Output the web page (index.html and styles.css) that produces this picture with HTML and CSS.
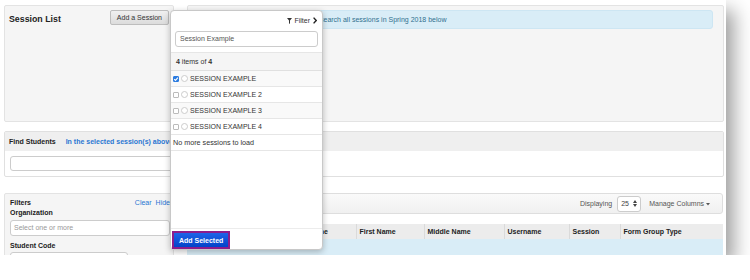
FILE: index.html
```html
<!DOCTYPE html>
<html lang="en">
<head>
<meta charset="utf-8">
<title>Session List</title>
<link rel="stylesheet" href="styles.css">
</head>
<body>
<div class="shot">
  <div class="top">
    <section class="panel sessions">
      <h2>Session List</h2>
      <button class="btn">Add a Session</button>
    </section>
    <section class="panel info">
      <div class="alert">search all sessions in Spring 2018 below</div>
    </section>
  </div>

  <section class="find">
    <div class="find-head">
      <b>Find Students</b>
      <a href="#">In the selected session(s) above</a>
    </div>
    <div class="find-body"><div class="field wide"></div></div>
  </section>

  <div class="results">
    <aside class="panel filters">
      <div class="filters-head">
        <b>Filters</b>
        <span class="links"><a href="#">Clear</a><a href="#">Hide</a></span>
      </div>
      <b class="label">Organization</b>
      <div class="field select">Select one or more</div>
      <b class="label code">Student Code</b>
      <div class="field short"></div>
    </aside>
    <div class="table-area">
      <div class="toolbar">
        <span>Displaying</span>
        <span class="count-select">25
          <svg width="4" height="7" viewBox="0 0 4 7"><path d="M0 3L2 0L4 3zM0 4L2 7L4 4z" fill="#444"/></svg>
        </span>
        <span class="manage">Manage Columns <svg width="4" height="3" viewBox="0 0 4 3"><path d="M0 0H4L2 2.5z" fill="#555"/></svg></span>
      </div>
      <table>
        <colgroup>
          <col style="width:102px"><col style="width:67px"><col style="width:68px"><col style="width:80px"><col style="width:65px"><col style="width:51px"><col>
        </colgroup>
        <thead>
          <tr><th>Student Code</th><th>Last Name</th><th>First Name</th><th>Middle Name</th><th>Username</th><th>Session</th><th>Form Group Type</th></tr>
        </thead>
        <tbody>
          <tr class="selected"><td></td><td></td><td></td><td></td><td></td><td></td><td></td></tr>
        </tbody>
      </table>
    </div>
  </div>

  <div class="dropdown">
    <div class="dd-head">
      <div class="dd-filter">
        <svg width="5" height="6" viewBox="0 0 5 6"><path d="M0 0H5L3 2.6V6L2 5.2V2.6z" fill="#333"/></svg>
        <span>Filter</span>
        <svg class="chev" width="4" height="7" viewBox="0 0 4 7"><path d="M0.6 0.6L3.2 3.5L0.6 6.4" fill="none" stroke="#222" stroke-width="1.4"/></svg>
      </div>
      <div class="dd-search">Session Example</div>
    </div>
    <div class="dd-count"><b>4</b> items of <b>4</b></div>
    <ul class="dd-list">
      <li><span class="check on"><svg width="6" height="6" viewBox="0 0 6 6"><path d="M1.2 3.1L2.5 4.4L4.9 1.6" fill="none" stroke="#fff" stroke-width="1.1"/></svg></span><span class="radio"></span>SESSION EXAMPLE</li>
      <li><span class="check"></span><span class="radio"></span>SESSION EXAMPLE 2</li>
      <li><span class="check"></span><span class="radio"></span>SESSION EXAMPLE 3</li>
      <li><span class="check"></span><span class="radio"></span>SESSION EXAMPLE 4</li>
    </ul>
    <div class="dd-more">No more sessions to load</div>
    <div class="dd-space"></div>
    <div class="dd-foot"><button class="add-btn">Add Selected</button></div>
  </div>
</div>
</body>
</html>
```

FILE: styles.css
```css
body {
  margin: 0;
  background: #fff;
  font-family: "Liberation Sans", Arial, sans-serif;
  font-size: 7px;
  color: #333;
}
a {
  color: #2a76d2;
  text-decoration: none;
  font-weight: bold;
}
.shot {
  position: relative;
  width: 726px;
  height: 255px;
  box-sizing: border-box;
  padding: 5px 2px 0 4px;
  background: #fff;
  overflow: hidden;
  box-shadow: 8px 10px 18px rgba(0, 0, 0, 0.38);
}
.panel {
  background: #f5f5f5;
  border: 1px solid #e3e3e3;
  border-radius: 2px;
  box-sizing: border-box;
}
.top {
  display: flex;
  gap: 13px;
  height: 117px;
}
.sessions {
  width: 170px;
  display: flex;
  justify-content: space-between;
  align-items: flex-start;
  padding: 4px 4px 0 4px;
}
.sessions h2 {
  margin: 4px 0 0;
  font-size: 8.8px;
  line-height: 10px;
  color: #222;
}
.btn {
  height: 15px;
  padding: 0 6px;
  font-family: "Liberation Sans", Arial, sans-serif;
  font-size: 7px;
  color: #333;
  border: 1px solid #bdbdbd;
  border-radius: 2px;
  background: linear-gradient(#f0f0f0, #dcdcdc);
}
.info {
  flex: 1;
  padding: 4px 10px 0;
}
.alert {
  height: 19px;
  box-sizing: border-box;
  line-height: 17px;
  padding-left: 121px;
  background: #d9edf7;
  border: 1px solid #cde6f3;
  border-radius: 3px;
  color: #31708f;
  white-space: nowrap;
}
.find {
  margin-top: 9px;
  height: 46px;
  box-sizing: border-box;
  background: #fff;
  border: 1px solid #e0e0e0;
  border-radius: 2px;
}
.find-head {
  height: 19px;
  display: flex;
  align-items: center;
  gap: 10px;
  padding-left: 4px;
  background: #efefef;
  color: #222;
}
.find-body {
  padding: 5px;
}
.field {
  height: 15px;
  box-sizing: border-box;
  background: #fff;
  border: 1px solid #ccc;
  border-radius: 3px;
}
.wide {
  width: 300px;
}
.results {
  display: flex;
  gap: 13px;
  margin-top: 16px;
}
.filters {
  width: 170px;
  height: 80px;
  flex: none;
  padding: 4px 3px 0 5px;
  line-height: 10px;
  color: #222;
}
.filters-head {
  display: flex;
  justify-content: space-between;
}
.links a {
  font-weight: normal;
  margin-left: 4px;
}
.label {
  display: block;
}
.select {
  height: 16px;
  margin-top: 2px;
  padding-left: 3px;
  line-height: 14px;
  color: #999;
}
.code {
  margin-top: 5px;
}
.short {
  width: 118px;
  margin-top: 1px;
}
.table-area {
  flex: 1;
  padding-right: 1px;
}
.toolbar {
  height: 21px;
  box-sizing: border-box;
  display: flex;
  justify-content: flex-end;
  align-items: center;
  padding-right: 12px;
  border: 1px solid #dedede;
  border-radius: 3px;
  background: linear-gradient(#fafafa, #f0f0f0);
  color: #555;
}
.count-select {
  width: 24px;
  height: 16px;
  box-sizing: border-box;
  margin: 0 8px 0 5px;
  padding: 0 3px;
  display: flex;
  align-items: center;
  justify-content: space-between;
  background: #fff;
  border: 1px solid #ccc;
  border-radius: 3px;
  color: #444;
}
.manage svg {
  vertical-align: middle;
}
table {
  margin-top: 10px;
  width: 100%;
  table-layout: fixed;
  border-collapse: collapse;
}
th {
  height: 15px;
  padding: 0 3px;
  text-align: left;
  background: #ececec;
  border-right: 1px solid #dadada;
  color: #222;
  white-space: nowrap;
  overflow: hidden;
}
th:last-child {
  border-right: 0;
}
.selected td {
  height: 16px;
  padding: 0;
  background: #d9edf7;
}
.dropdown {
  position: absolute;
  left: 170px;
  top: 10px;
  width: 153px;
  height: 240px;
  box-sizing: border-box;
  display: flex;
  flex-direction: column;
  background: #fff;
  border: 1px solid #c8c8c8;
  border-radius: 4px;
  box-shadow: 0 2px 6px rgba(0, 0, 0, 0.25);
}
.dd-head {
  padding: 4px 4px 5px;
  border-bottom: 1px solid #e6e6e6;
}
.dd-filter {
  height: 11px;
  display: flex;
  justify-content: flex-end;
  align-items: center;
  gap: 2px;
  padding-right: 1px;
  color: #333;
}
.dd-filter .chev {
  margin-left: 1px;
}
.dd-search {
  height: 16px;
  box-sizing: border-box;
  margin-top: 5px;
  padding-left: 4px;
  line-height: 14px;
  border: 1px solid #ccc;
  border-radius: 3px;
  color: #555;
}
.dd-count {
  height: 17px;
  line-height: 18px;
  padding-left: 5px;
  background: #f5f5f5;
  border-bottom: 1px solid #e0e0e0;
  color: #333;
}
.dd-list {
  list-style: none;
  margin: 0;
  padding: 0;
}
.dd-list li {
  height: 15px;
  display: flex;
  align-items: center;
  padding-left: 2px;
  border-bottom: 1px solid #e6e6e6;
  color: #333;
}
.dd-list li:nth-child(odd) {
  background: #f9f9f9;
}
.check,
.radio {
  width: 6px;
  height: 6px;
  box-sizing: border-box;
  margin-right: 2px;
  border: 1px solid #bbb;
  background: #fff;
}
.check {
  border-radius: 1px;
}
.check.on {
  display: flex;
  border-color: #2b7be0;
  background: #2b7be0;
}
.check.on svg {
  margin: -1px;
}
.radio {
  width: 7px;
  height: 7px;
  border-radius: 50%;
  border-color: #ccc;
}
.dd-more {
  height: 15px;
  line-height: 15px;
  padding-left: 2px;
  font-size: 7.2px;
  border-bottom: 1px solid #e6e6e6;
  color: #333;
}
.dd-space {
  flex: 1;
}
.dd-foot {
  padding: 2px 0 0 1px;
  border-top: 1px solid #ececec;
}
.add-btn {
  display: block;
  height: 18px;
  box-sizing: border-box;
  padding: 0 5px;
  font-family: "Liberation Sans", Arial, sans-serif;
  font-size: 7px;
  font-weight: bold;
  color: #fff;
  border: 2px solid #8c1d8c;
  background: linear-gradient(#1f63e8, #0343c9);
}
```
